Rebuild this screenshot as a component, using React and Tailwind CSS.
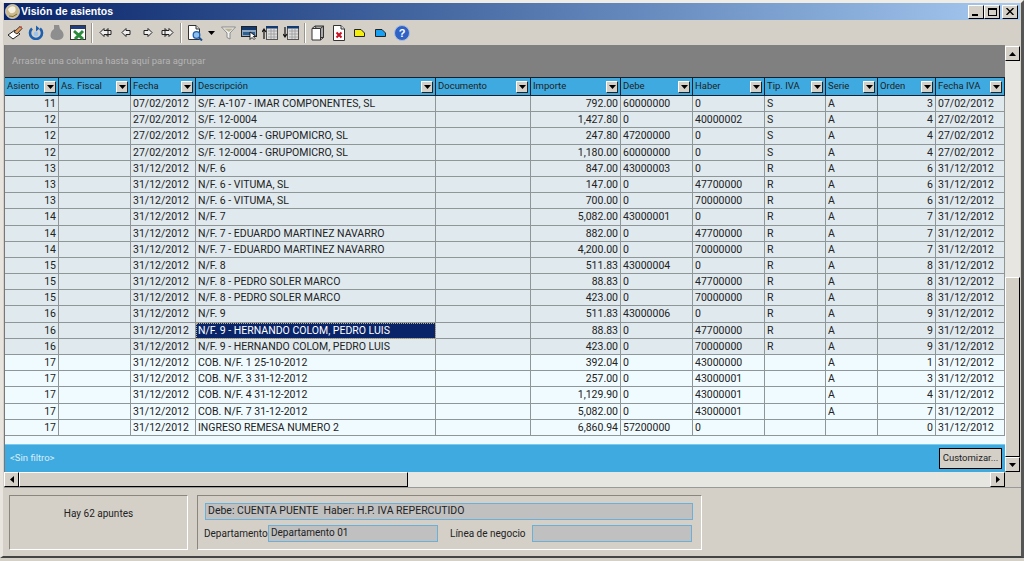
import React from "react";

const colClass = "grid grid-cols-[54px_72px_65px_240px_95px_90px_72px_72px_61px_52px_58px_69px]";

const headers = ["Asiento", "As. Fiscal", "Fecha", "Descripción", "Documento", "Importe", "Debe", "Haber", "Tip. IVA", "Serie", "Orden", "Fecha IVA"];

const F1 = "31/12/2012";
const F2 = "27/02/2012";
// asiento, fecha, descripcion, importe, debe, haber, iva, serie, orden
const rows = [
  ["11", "07/02/2012", "S/F. A-107 - IMAR COMPONENTES, SL", "792.00", "60000000", "0", "S", "A", "3"],
  ["12", F2, "S/F. 12-0004", "1,427.80", "0", "40000002", "S", "A", "4"],
  ["12", F2, "S/F. 12-0004 - GRUPOMICRO, SL", "247.80", "47200000", "0", "S", "A", "4"],
  ["12", F2, "S/F. 12-0004 - GRUPOMICRO, SL", "1,180.00", "60000000", "0", "S", "A", "4"],
  ["13", F1, "N/F. 6", "847.00", "43000003", "0", "R", "A", "6"],
  ["13", F1, "N/F. 6 - VITUMA, SL", "147.00", "0", "47700000", "R", "A", "6"],
  ["13", F1, "N/F. 6 - VITUMA, SL", "700.00", "0", "70000000", "R", "A", "6"],
  ["14", F1, "N/F. 7", "5,082.00", "43000001", "0", "R", "A", "7"],
  ["14", F1, "N/F. 7 - EDUARDO MARTINEZ NAVARRO", "882.00", "0", "47700000", "R", "A", "7"],
  ["14", F1, "N/F. 7 - EDUARDO MARTINEZ NAVARRO", "4,200.00", "0", "70000000", "R", "A", "7"],
  ["15", F1, "N/F. 8", "511.83", "43000004", "0", "R", "A", "8"],
  ["15", F1, "N/F. 8 - PEDRO SOLER MARCO", "88.83", "0", "47700000", "R", "A", "8"],
  ["15", F1, "N/F. 8 - PEDRO SOLER MARCO", "423.00", "0", "70000000", "R", "A", "8"],
  ["16", F1, "N/F. 9", "511.83", "43000006", "0", "R", "A", "9"],
  ["16", F1, "N/F. 9 - HERNANDO COLOM, PEDRO LUIS", "88.83", "0", "47700000", "R", "A", "9"],
  ["16", F1, "N/F. 9 - HERNANDO COLOM, PEDRO LUIS", "423.00", "0", "70000000", "R", "A", "9"],
  ["17", F1, "COB. N/F. 1 25-10-2012", "392.04", "0", "43000000", "", "A", "1"],
  ["17", F1, "COB. N/F. 3 31-12-2012", "257.00", "0", "43000001", "", "A", "3"],
  ["17", F1, "COB. N/F. 4 31-12-2012", "1,129.90", "0", "43000001", "", "A", "4"],
  ["17", F1, "COB. N/F. 7 31-12-2012", "5,082.00", "0", "43000001", "", "A", "7"],
  ["17", F1, "INGRESO REMESA NUMERO 2", "6,860.94", "57200000", "0", "", "", "0"],
];

const Ico = ({ children, w = 16, h = 16 }) => (
  <svg width={w} height={h} viewBox={`0 0 ${w} ${h}`}>{children}</svg>
);

const Arrow = ({ dir }) => {
  const d = {
    up: "M0 4 L3.5 0 L7 4 Z",
    down: "M0 0 L7 0 L3.5 4 Z",
  };
  if (dir === "left") return <svg width="4" height="7" viewBox="0 0 4 7"><path d="M4 0V7L0 3.5Z" fill="#000" /></svg>;
  if (dir === "right") return <svg width="4" height="7" viewBox="0 0 4 7"><path d="M0 0V7L4 3.5Z" fill="#000" /></svg>;
  return <svg width="7" height="4" viewBox="0 0 7 4"><path d={d[dir]} fill="#000" /></svg>;
};

const Nav = ({ dir, double }) => {
  const one = "M6 2.5 L2 6.5 L6 10.5 L6 8.5 L10 8.5 L10 4.5 L6 4.5 Z";
  return (
    <Ico w={14} h={13}>
      <g fill="#efefef" stroke="#222" strokeWidth="1" transform={dir === "right" ? "translate(14 0) scale(-1 1)" : double ? "translate(0 0)" : "translate(1 0)"}>
        {double && <path d="M10 2.5 L6 6.5 L10 10.5 L10 8.5 L13 8.5 L13 4.5 L10 4.5 Z" />}
        <path d={one} />
      </g>
    </Ico>
  );
};

const toolbar = [
  <Ico key="a" w={16} h={15}><path d="M1 10 L8 5 L13 9 L6 14 Z" fill="#fff" stroke="#222" /><path d="M7 7 L13 1.5 L15 3.5 L10 9 Z" fill="#e8a060" stroke="#333" /><path d="M13 1.5 L15 3.5 L14.5 1 Z" fill="#d33" /></Ico>,
  <Ico key="b" w={16} h={15}><path d="M4 3.5 A6 6 0 1 0 12 3.5" fill="none" stroke="#1d5fb0" strokeWidth="2.6" /><path d="M8 0.5 L11.5 3.5 L8 6.5 Z" fill="#1d5fb0" /><circle cx="8" cy="9" r="2.4" fill="#9cc3ea" /></Ico>,
  <Ico key="c" w={16} h={17}><path d="M5 1 H10 L11 5 Q15 8 14.5 12 Q13.5 16 8 16 Q2 16 1.5 12 Q1.5 7 5 5 Z" fill="#8e8e8e" /></Ico>,
  <Ico key="d" w={16} h={15}><rect x="0.5" y="0.5" width="15" height="14" fill="#fff" stroke="#333" /><rect x="1" y="1" width="14" height="3" fill="#1f3f80" /><path d="M4 6 L13 14 M13 6 L5 14" stroke="#2c8a3c" strokeWidth="3" /></Ico>,
  "sep",
  <Nav key="e" dir="left" double />,
  <Nav key="f" dir="left" />,
  <Nav key="g" dir="right" />,
  <Nav key="h" dir="right" double />,
  "sep",
  <Ico key="i" w={16} h={16}><path d="M1.5 0.5 H9 L12.5 4 V14.5 H1.5 Z" fill="#fff" stroke="#333" /><path d="M9 0.5 V4 H12.5" fill="#ddd" stroke="#333" /><circle cx="9.5" cy="10" r="3.3" fill="#8fc0ec" stroke="#1d5fb0" strokeWidth="1.3" /><path d="M12 12.5 L15 15.5" stroke="#1d4f90" strokeWidth="2" /></Ico>,
  "drop",
  <Ico key="j" w={15} h={14}><path d="M0.5 1 H14.5 L9 7 V13 L6 11.5 V7 Z" fill="#f2f2f2" stroke="#8a8a8a" /><path d="M3 2.5 H12 L8 6 Z" fill="#b8b294" /></Ico>,
  <Ico key="k" w={16} h={14}><rect x="0.5" y="0.5" width="15" height="10" fill="#8fa8c0" stroke="#222" /><rect x="1" y="1" width="14" height="3" fill="#123a70" /><rect x="2" y="6" width="12" height="3" fill="#2d5f90" /><path d="M9 6 L9 13.5 L11 11.5 L13 13.5 L14 12.5 L12.3 10.5 L14.5 10 Z" fill="#fff" stroke="#000" strokeWidth="0.8" /></Ico>,
  <Ico key="l" w={16} h={15}><rect x="4.5" y="1.5" width="11" height="13" fill="#ddd" stroke="#555" /><rect x="4" y="1" width="12" height="2.5" fill="#123a70" /><path d="M6 6 H15 M6 9 H15 M6 12 H15 M9 4 V14 M12 4 V14" stroke="#999" strokeWidth="0.8" /><path d="M2 14 V5 M0 7 L2 4 L4 7" fill="none" stroke="#111" strokeWidth="1.2" /></Ico>,
  <Ico key="m" w={16} h={15}><rect x="4.5" y="1.5" width="11" height="13" fill="#ddd" stroke="#555" /><rect x="4" y="1" width="12" height="2.5" fill="#123a70" /><path d="M6 6 H15 M6 9 H15 M6 12 H15 M9 4 V14 M12 4 V14" stroke="#999" strokeWidth="0.8" /><path d="M2 2 V11 M0 9 L2 12 L4 9" fill="none" stroke="#111" strokeWidth="1.2" /></Ico>,
  "sep",
  <Ico key="n" w={14} h={16}><path d="M4 1 H12.5 V12.5 H10 Z" fill="#aaa" stroke="#333" /><path d="M1 3.5 H9.5 V15 H1 Z" fill="#fff" stroke="#333" /><path d="M1 3.5 L4 1 M9.5 3.5 L12.5 1 M9.5 15 L12.5 12.5" stroke="#333" /></Ico>,
  <Ico key="o" w={12} h={16}><path d="M0.5 0.5 H8 L11.5 4 V15.5 H0.5 Z" fill="#fff" stroke="#333" /><path d="M8 0.5 V4 H11.5" fill="#ddd" stroke="#333" /><path d="M3.5 7.5 L8.5 12.5 M8.5 7.5 L3.5 12.5" stroke="#cc1020" strokeWidth="2" /></Ico>,
  <Ico key="p" w={11} h={8}><path d="M0.5 0.5 H7 L10.5 4 V7.5 H0.5 Z" fill="#f5ef10" stroke="#222" /></Ico>,
  <Ico key="q" w={11} h={8}><path d="M0.5 0.5 H7 L10.5 4 V7.5 H0.5 Z" fill="#1aa0f0" stroke="#222" /></Ico>,
  <Ico key="r" w={16} h={16}><circle cx="8" cy="8" r="7.5" fill="#2f62c4" stroke="#a9bde0" /><text x="8" y="12" textAnchor="middle" fontSize="11" fontWeight="700" fill="#fff" fontFamily="Liberation Sans">?</text></Ico>,
];

const raised = "border border-t-white border-l-white border-r-black border-b-black";

const ScrollBtn = ({ dir }) => (
  <div className={`h-[15px] w-[15px] shrink-0 bg-[#d4d0c8] flex items-center justify-center ${raised}`}>
    <Arrow dir={dir} />
  </div>
);

const Cell = ({ right, children, className = "" }) => (
  <div className={`border-r border-b border-[#8f9698] px-[2px] leading-[15px] whitespace-nowrap overflow-hidden ${right ? "text-right" : ""} ${className}`}>
    {children}
  </div>
);

const GridRow = ({ r, i }) => {
  const bg = i < 16 ? "bg-[#dfe9ee]" : "bg-[#f0fbff]";
  const [asiento, fecha, desc, imp, debe, haber, iva, serie, orden] = r;
  return (
    <div className={`${colClass} h-[16.2px] ${bg}`}>
      <Cell right>{asiento}</Cell>
      <Cell />
      <Cell>{fecha}</Cell>
      <Cell className={i === 14 ? "!bg-[#0a246a] text-white outline-1 -outline-offset-1 outline-dotted outline-[#c0b080]" : ""}>{desc}</Cell>
      <Cell />
      <Cell right>{imp}</Cell>
      <Cell>{debe}</Cell>
      <Cell>{haber}</Cell>
      <Cell>{iva}</Cell>
      <Cell>{serie}</Cell>
      <Cell right>{orden}</Cell>
      <Cell>{fecha}</Cell>
    </div>
  );
};

const Field = ({ className = "", children }) => (
  <div className={`h-[17px] bg-[#c0c0c0] border border-[#6cb0d8] px-[2px] leading-[13px] text-[#222] whitespace-nowrap ${className}`}>
    {children}
  </div>
);

export default function App() {
  return (
    <div className="w-[1024px] h-[561px] overflow-hidden bg-[#d4d0c8] text-[10.5px] text-[#222] font-['Roboto','Liberation_Sans',sans-serif] flex flex-col">
      <div className="h-[558px] mx-0 border-t-[3px] border-x-[3px] border-b-[2px] border-t-[#efece6] border-l-[#e8e5df] border-r-[#555] border-b-[#444] flex flex-col">
        {/* title bar */}
        <div className="h-[17px] mx-px flex items-center bg-gradient-to-r from-[#0a246a] to-[#a6caf0] pr-[2px]">
          <svg width="15" height="15" viewBox="0 0 15 15" className="ml-px">
            <circle cx="7.5" cy="7.5" r="7" fill="#c9b98a" stroke="#ddd" strokeWidth="0.8" />
            <path d="M3 5 Q6 1 10 3 Q12 7 8 9 Q4 10 3 5Z" fill="#f3efe0" />
            <path d="M4 12 Q8 14 12 10" stroke="#7d6a3a" fill="none" />
          </svg>
          <span className="ml-[1px] text-[10.5px] font-bold text-white font-['Liberation_Sans',sans-serif]">Visión de asientos</span>
          <div className="ml-auto flex">
            <div className={`w-[16px] h-[14px] bg-[#d4d0c8] flex items-end pl-[3px] pb-[2px] ${raised}`}><div className="w-[6px] h-[2px] bg-black" /></div>
            <div className={`w-[16px] h-[14px] bg-[#d4d0c8] flex items-center justify-center ${raised}`}><div className="w-[9px] h-[8px] border border-black border-t-2" /></div>
            <div className={`w-[16px] h-[14px] ml-[2px] bg-[#d4d0c8] flex items-center justify-center ${raised}`}>
              <svg width="8" height="7" viewBox="0 0 8 7"><path d="M0.5 0 L7.5 7 M7.5 0 L0.5 7" stroke="#000" strokeWidth="1.4" /></svg>
            </div>
          </div>
        </div>

        {/* toolbar */}
        <div className="h-[25px] flex items-center pl-[2px] shrink-0">
          {toolbar.map((t, i) =>
            t === "sep" ? (
              <div key={i} className="w-[4px] h-[20px] mx-[1px] flex justify-center">
                <div className="w-[2px] h-full border-l border-l-[#9a968e] border-r border-r-white" />
              </div>
            ) : t === "drop" ? (
              <div key={i} className="w-[13px] flex items-center justify-center"><Arrow dir="down" /></div>
            ) : (
              <div key={i} className="w-[20.9px] flex items-center justify-center">{t}</div>
            )
          )}
        </div>

        {/* grid + vertical scroll */}
        <div className="flex border-l border-[#777] ml-px h-[427px] shrink-0">
          <div className="w-[1000px] flex flex-col shrink-0">
            <div className="h-[33px] bg-[#808080] text-[#b4b4b4] flex items-center pl-[7px] text-[9.5px]">
              Arrastre una columna hasta aquí para agrupar
            </div>
            <div className={`${colClass} h-[17px] bg-[#3eaae0] border-y border-[#123] box-content -mt-px text-[9.5px]`}>
              {headers.map((h) => (
                <div key={h} className="border-r border-[#123] pl-[2px] pr-[2px] flex items-center justify-between whitespace-nowrap overflow-hidden">
                  <span>{h}</span>
                  <div className={`w-[12px] h-[12px] shrink-0 bg-[#d4d0c8] flex items-center justify-center border border-t-white border-l-white border-r-[#222] border-b-[#222]`}>
                    <Arrow dir="down" />
                  </div>
                </div>
              ))}
            </div>
            <div className="flex-1 bg-[#f0fbff] overflow-hidden">
              {rows.map((r, i) => <GridRow key={i} r={r} i={i} />)}
            </div>
            <div className="h-[28px] shrink-0 bg-[#3eaae0] border-t border-[#7cc8ee] flex items-center justify-between pl-[5px] pr-[3px] text-[#d8eefa] text-[9.5px]">
              <span>&lt;Sin filtro&gt;</span>
              <div className={`w-[63px] h-[21px] mb-[1px] bg-[#d4d0c8] text-[#222] flex items-center justify-center border border-black`}>Customizar...</div>
            </div>
          </div>
          {/* vertical scrollbar */}
          <div className="w-[15px] flex flex-col shrink-0">
            <div className="pt-px"><ScrollBtn dir="up" /></div>
            <div className="h-[216px] bg-[#e8e6e0]" />
            <div className={`flex-1 bg-[#d4d0c8] ${raised}`} />
            <ScrollBtn dir="down" />
          </div>
        </div>

        {/* horizontal scrollbar */}
        <div className="h-[15px] flex ml-px shrink-0 border-b border-[#999] box-content">
          <ScrollBtn dir="left" />
          <div className={`w-[389px] bg-[#d4d0c8] ${raised}`} />
          <div className="w-[582px] bg-[#e8e6e0]" />
          <ScrollBtn dir="right" />
        </div>

        {/* bottom panels */}
        <div className="flex gap-[9px] mt-[7px] ml-[6px] text-[10px]">
          <div className="w-[179px] h-[55px] border border-t-[#8a867e] border-l-[#8a867e] border-r-white border-b-white flex justify-center pt-[10px] text-center">
            Hay 62 apuntes
          </div>
          <div className="w-[505px] h-[55px] border border-t-[#8a867e] border-l-[#8a867e] border-r-white border-b-white pt-[7px] pl-[7px] pr-[8px] flex flex-col gap-[5px]">
            <Field className="text-[10.5px]">Debe: CUENTA PUENTE&nbsp; Haber: H.P. IVA REPERCUTIDO</Field>
            <div className="flex items-center">
              <span className="w-[64px] -ml-px shrink-0">Departamento</span>
              <Field className="w-[170px]">Departamento 01</Field>
              <span className="ml-[12px] w-[82px] shrink-0">Línea de negocio</span>
              <Field className="w-[160px]" />
            </div>
          </div>
        </div>
      </div>
    </div>
  );
}
